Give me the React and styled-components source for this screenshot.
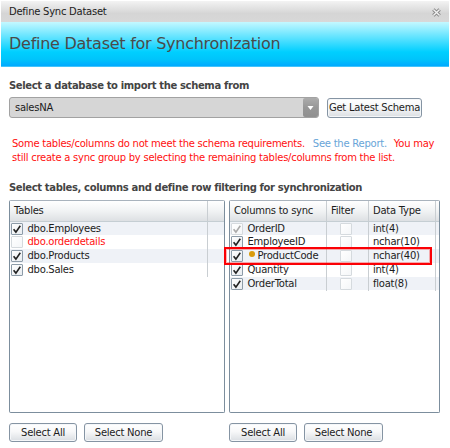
import React from 'react';
import styled, { createGlobalStyle } from 'styled-components';

const GlobalStyle = createGlobalStyle`
  * { box-sizing: border-box; }
  body { margin: 0; background: #fff; }
`;

const Dialog = styled.div`
  width: 450px;
  height: 448px;
  padding: 1px 1px 0;
  overflow: hidden;
  background: #fff;
  color: #1c1c1c;
  font: 10px/14px 'DejaVu Sans', Verdana, sans-serif;
  letter-spacing: -0.25px;
  white-space: nowrap;
`;

const TitleBar = styled.header`
  display: flex;
  align-items: center;
  justify-content: space-between;
  height: 21px;
  padding: 1px 8px 0 8px;
  background: linear-gradient(#f3f3f3, #d5d5d5 60%, #d8d8d8);
`;

const Banner = styled.h1`
  height: 45px;
  margin: 0;
  padding: 0 8px;
  border-bottom: 1px solid #42c4fb;
  background: linear-gradient(#c4f8ff, #00cfff 68%, #00c4fb 85%, #00aaff);
  color: #4a4a4a;
  font-size: 16px;
  font-weight: 400;
  line-height: 43px;
  letter-spacing: -0.26px;
`;

const Body = styled.main`
  padding: 12px 8px 0;
`;

const Label = styled.h2`
  margin: ${(p) => p.$gap || 0}px 0 0;
  color: #444;
  font-size: 10px;
  font-weight: 700;
  line-height: 14px;
  letter-spacing: -0.36px;
`;

const DatabaseRow = styled.div`
  display: flex;
  align-items: center;
  gap: 8px;
  height: 21px;
  margin-top: 4px;
`;

const Combo = styled.div`
  display: flex;
  align-items: center;
  width: 310px;
  height: 21px;
  padding-left: 5px;
  border: 1px solid #a2a2a2;
  border-radius: 3px;
  background: #d6d6d6;
`;

const ComboArrow = styled.span`
  display: flex;
  align-items: center;
  justify-content: center;
  width: 15px;
  height: 19px;
  margin-left: auto;
  border-radius: 2px;
  background: linear-gradient(#acacac, #979797 50%, #909090);
`;

const Button = styled.button`
  display: flex;
  align-items: center;
  justify-content: center;
  flex: none;
  width: ${(p) => p.$width}px;
  height: ${(p) => p.$height || 19}px;
  padding: 0;
  border: 1px solid #8594a3;
  border-radius: 3px;
  background: linear-gradient(#fff, #f7f8f9 45%, #dadee2);
  box-shadow: inset 0 0 0 1px #f5f7f9;
  color: #1c1c1c;
  font: inherit;
  letter-spacing: inherit;
`;

const Warning = styled.p`
  margin: 19px 0 0;
  padding-left: 3px;
  color: #ff1010;
`;

const WarningLine = styled.span`
  display: block;
`;

const ReportLink = styled.a`
  margin: 0 4px 0 5px;
  color: #68a5d8;
`;

const Panels = styled.div`
  display: flex;
  gap: 4px;
  margin-top: 5px;
`;

const Panel = styled.section`
  width: ${(p) => p.$width}px;
`;

const Grid = styled.div`
  position: relative;
  height: 213px;
  border: 1px solid #7c8e9d;
  border-top-color: #a9b3bd;
  border-radius: 2px;
`;

const GridRow = styled.div`
  display: grid;
  grid-template-columns: ${(p) => p.$columns};
  height: 13.8px;
  background: ${(p) => (p.$shaded ? '#eff2f7' : '#fff')};
  color: ${(p) => (p.$error ? '#ff1010' : '#1c1c1c')};
`;

const GridHead = styled(GridRow)`
  height: 20.5px;
  border-bottom: 1px solid #c5ced3;
  background: linear-gradient(#fff, #f1f3f4 50%, #dde0e3);
`;

const Cell = styled.div`
  display: flex;
  align-items: center;
  min-width: 0;
  padding-left: ${(p) => p.$pad || 0}px;
  border-right: ${(p) => (p.$last ? 'none' : '1px solid #c9ced2')};
`;

const Check = styled.span`
  display: flex;
  flex: none;
  width: 12px;
  height: 12px;
  margin-right: 4.5px;
  border: 1px solid ${(p) => (p.$faint ? '#d5dade' : '#8c9ba8')};
  border-radius: 1px;
  background: linear-gradient(135deg, #fff, ${(p) => (p.$faint ? '#f4f6f8' : '#e8ecf0')});
`;

const Dot = styled.i`
  width: 6px;
  height: 6px;
  margin: -4px 2.5px 0 1.5px;
  border-radius: 50%;
  background: #d99b0b;
`;

const Highlight = styled.div`
  position: absolute;
  left: -6px;
  top: 46px;
  width: 208px;
  height: 18px;
  border: 2px solid #fb0005;
  box-shadow: inset 0 0 0 1px rgba(255, 0, 0, 0.3);
`;

const Actions = styled.div`
  display: flex;
  gap: 7px;
  margin-top: 10px;
`;

function Checkbox({ checked, faint }) {
  return (
    <Check $faint={faint}>
      {checked && (
        <svg width="10" height="10" viewBox="0 0 10 10">
          <path d="M1.6 5.2 3.9 8.1 8.3 1.8" fill="none" stroke={faint ? '#aaa' : '#222'} strokeWidth="1.6" />
        </svg>
      )}
    </Check>
  );
}

function SelectButtons() {
  return (
    <Actions>
      <Button $width={68}>Select All</Button>
      <Button $width={79}>Select None</Button>
    </Actions>
  );
}

const tables = [
  { name: 'dbo.Employees', checked: true },
  { name: 'dbo.orderdetails', error: true },
  { name: 'dbo.Products', checked: true },
  { name: 'dbo.Sales', checked: true },
];

const columns = [
  { name: 'OrderID', type: 'int(4)', faint: true },
  { name: 'EmployeeID', type: 'nchar(10)' },
  { name: 'ProductCode', type: 'nchar(40)', dot: true },
  { name: 'Quantity', type: 'int(4)' },
  { name: 'OrderTotal', type: 'float(8)' },
];

const tableTracks = '198px 1fr';
const columnTracks = '97px 42px 67px 1fr';

export default function App() {
  return (
    <>
      <GlobalStyle />
      <Dialog>
        <TitleBar>
          <span>Define Sync Dataset</span>
          <svg width="9" height="9" viewBox="0 0 9 9">
            <path d="M1.3 1.5 7.7 7.5M7.7 1.5 1.3 7.5" stroke="#888" strokeWidth="3.2" />
            <path d="M1.4 1.6 7.6 7.4M7.6 1.6 1.4 7.4" stroke="#f2f2f2" strokeWidth="1.4" />
          </svg>
        </TitleBar>
        <Banner>Define Dataset for Synchronization</Banner>
        <Body>
          <Label>Select a database to import the schema from</Label>
          <DatabaseRow>
            <Combo>
              <span>salesNA</span>
              <ComboArrow>
                <svg width="7" height="4" viewBox="0 0 7 4"><path d="M0.5 0h6L3.5 4z" fill="#fff" /></svg>
              </ComboArrow>
            </Combo>
            <Button $width={95} $height={20}>Get Latest Schema</Button>
          </DatabaseRow>
          <Warning>
            <WarningLine>
              Some tables/columns do not meet the schema requirements.
              <ReportLink> See the Report.</ReportLink> You may
            </WarningLine>
            <WarningLine>
              still create a sync group by selecting the remaining tables/columns from the list.
            </WarningLine>
          </Warning>
          <Label $gap={16}>Select tables, columns and define row filtering for synchronization</Label>
          <Panels>
            <Panel $width={216}>
              <Grid>
                <GridHead $columns={tableTracks}>
                  <Cell $pad={4}>Tables</Cell>
                  <Cell $last />
                </GridHead>
                {tables.map((t, i) => (
                  <GridRow key={t.name} $columns={tableTracks} $shaded={i % 2 === 0} $error={t.error}>
                    <Cell $pad={1}>
                      <Checkbox checked={t.checked} faint={t.error} />
                      {t.name}
                    </Cell>
                    <Cell $last />
                  </GridRow>
                ))}
              </Grid>
              <SelectButtons />
            </Panel>
            <Panel $width={211}>
              <Grid>
                <GridHead $columns={columnTracks}>
                  <Cell $pad={4}>Columns to sync</Cell>
                  <Cell $pad={4}>Filter</Cell>
                  <Cell $pad={4}>Data Type</Cell>
                  <Cell $last />
                </GridHead>
                {columns.map((c, i) => (
                  <GridRow key={c.name} $columns={columnTracks} $shaded={i % 2 === 0}>
                    <Cell $pad={1}>
                      <Checkbox checked faint={c.faint} />
                      {c.dot && <Dot />}
                      {c.name}
                    </Cell>
                    <Cell $pad={13}><Checkbox faint /></Cell>
                    <Cell $pad={4}>{c.type}</Cell>
                    <Cell $last />
                  </GridRow>
                ))}
                <Highlight />
              </Grid>
              <SelectButtons />
            </Panel>
          </Panels>
        </Body>
      </Dialog>
    </>
  );
}
